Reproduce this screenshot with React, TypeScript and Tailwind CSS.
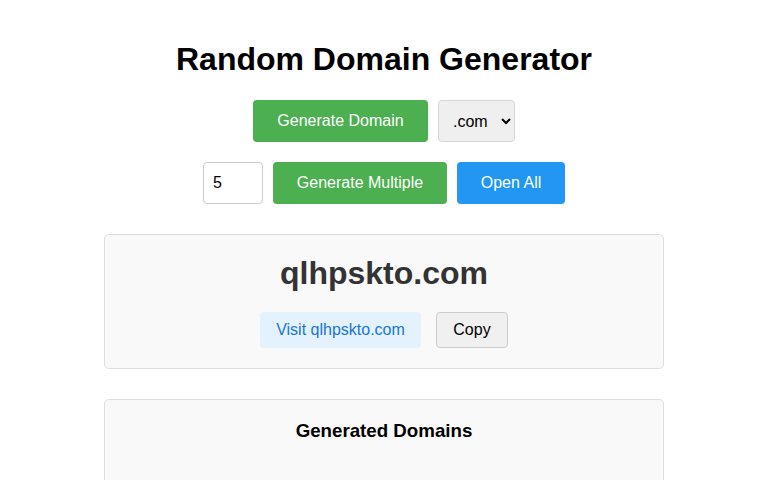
import React from 'react';

function App() {
  const domain = 'qlhpskto.com';

  return (
    <div className="min-h-[480px] bg-white font-['Liberation_Sans',Arial,sans-serif] text-black">
      <div className="mx-auto flex w-[560px] flex-col items-center pt-[41px]">
        <h1 className="h-[37px] text-[32px] font-bold leading-[37px]">Random Domain Generator</h1>

        <div className="mt-[22px] flex items-center gap-[10px]">
          <button className="h-[42px] w-[175px] rounded-[4px] bg-[#4caf50] text-[16px] text-white">
            Generate Domain
          </button>
          <select
            defaultValue=".com"
            className="h-[42px] w-[77px] rounded-[4px] border border-[#d6d6d6] bg-[#efefef] px-[10px] text-[16px] text-black"
          >
            <option>.com</option>
            <option>.net</option>
            <option>.org</option>
            <option>.io</option>
          </select>
        </div>

        <div className="mt-[20px] flex items-center gap-[10px]">
          <input
            type="number"
            defaultValue={5}
            className="h-[42px] w-[60px] rounded-[4px] border border-[#ccc] px-[9px] text-[16px] text-black"
          />
          <button className="h-[42px] w-[174px] rounded-[4px] bg-[#4caf50] text-[16px] text-white">
            Generate Multiple
          </button>
          <button className="h-[42px] w-[108px] rounded-[4px] bg-[#2196f3] text-[16px] text-white">
            Open All
          </button>
        </div>

        <div className="mt-[30px] flex w-full flex-col items-center rounded-[5px] border border-[#ddd] bg-[#f9f9f9] p-[20px]">
          <div className="h-[37px] text-[32px] font-bold leading-[37px] text-[#333]">{domain}</div>
          <div className="mt-[20px] flex items-center gap-[15px]">
            <a className="flex h-[36px] w-[161px] items-center justify-center rounded-[4px] bg-[#e3f2fd] text-[16px] text-[#1976d2]">
              Visit {domain}
            </a>
            <button className="h-[36px] w-[72px] rounded-[4px] border border-[#ccc] bg-[#f0f0f0] text-[16px] text-black">
              Copy
            </button>
          </div>
        </div>

        <div className="mt-[30px] flex h-[120px] w-full flex-col items-center rounded-[5px] border border-[#ddd] bg-[#f9f9f9] p-[20px]">
          <h3 className="text-[18.72px] font-bold leading-[22px]">Generated Domains</h3>
        </div>
      </div>
    </div>
  );
}

export default App;
